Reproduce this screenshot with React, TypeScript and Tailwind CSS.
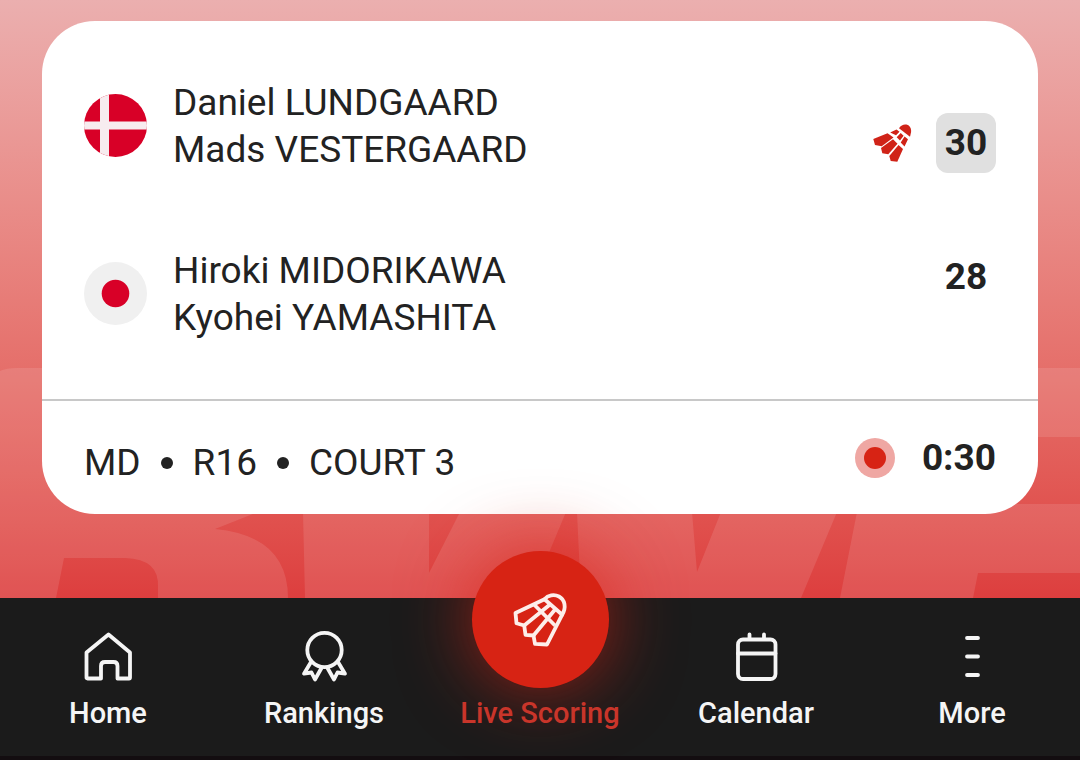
import type { ReactNode } from "react";

const teams = [
  {
    id: 0,
    country: "Denmark",
    players: ["Daniel LUNDGAARD", "Mads VESTERGAARD"],
    score: 30,
    serving: true,
  },
  {
    id: 1,
    country: "Japan",
    players: ["Hiroki MIDORIKAWA", "Kyohei YAMASHITA"],
    score: 28,
    serving: false,
  },
];

const Flag = ({ country }: { country: string }) => {
  if (country === "Denmark") {
    return (
      <svg viewBox="0 0 63 63" className="size-[63px] shrink-0" role="img" aria-label={country}>
        <clipPath id="flag-clip">
          <circle cx="31.5" cy="31.5" r="31.5" />
        </clipPath>
        <g clipPath="url(#flag-clip)">
          <rect width="63" height="63" fill="#d80027" />
          <path d="M16 0h9v63h-9zM0 27.5h63v8H0z" fill="#f7ecef" />
        </g>
      </svg>
    );
  }

  return (
    <svg viewBox="0 0 63 63" className="size-[63px] shrink-0" role="img" aria-label={country}>
      <circle cx="31.5" cy="31.5" r="31.5" fill="#f0f0f0" />
      <circle cx="31.5" cy="31.5" r="13.8" fill="#d80027" />
    </svg>
  );
};

const ServeIcon = () => (
  <svg viewBox="0 0 40 40" className="size-10" fill="#d02318" aria-label="Serving" role="img">
    <path d="M27 5.300C29 2 32 1 34.500 1.600 38 2.500 39.600 6 39 9.500L38 13.700z" />
    <path d="M18.200 9.500 24.500 6.500 27.500 8.700 24 12.200zM24.700 14.200 28.700 10 31.600 12.700 28 17.500zM32.600 13.500 36 16.200 32.500 23.500 28.700 19.500z" />
    <path d="M1.300 16 15.500 10.300 21.500 14.600 9.700 23.300 3 22z" />
    <path d="M9 25 21 16.200 25.500 20.800 16.300 31.200 10.300 30.300z" />
    <path d="M17.300 33 26.500 22 31 26 25.300 38.700 18.700 38z" />
  </svg>
);

// light band behind the card, cut by the darker shards
const Backdrop = () => (
  <svg
    viewBox="0 0 1080 238"
    preserveAspectRatio="xMidYMax slice"
    className="absolute inset-x-0 bottom-0 h-[238px] w-full"
    aria-hidden="true"
  >
    <mask id="shards">
      <rect width="1080" height="238" fill="#fff" />
      <g fill="#000">
        <path d="M0 8v3Q6 8 18 8z" />
        <path d="M960 77h120v67H960z" />
        <path d="M258 152L215 169Q288 176 288 238H305L303 152z" />
        <path d="M64 198H125Q160 199 158 228V238H56z" />
        <path d="M429 152H460L429 213z" />
        <path d="M566 152H577L581 238H530z" />
        <path d="M692 152H721L697 212z" />
        <path d="M837 152H857L840 238H801z" />
        <path d="M978 213H1080V238H973z" />
      </g>
    </mask>
    <rect y="8" width="1080" height="230" fill="#fff" fillOpacity="0.11" mask="url(#shards)" />
  </svg>
);

const NavIcon = ({ children }: { children: ReactNode }) => (
  <svg
    viewBox="0 0 54 54"
    className="size-[54px]"
    fill="none"
    stroke="#f5f5f5"
    strokeWidth="3.8"
    strokeLinecap="round"
    strokeLinejoin="round"
    aria-hidden="true"
  >
    {children}
  </svg>
);

const navItems = [
  {
    label: "Home",
    icon: (
      <NavIcon>
        <path d="M5.500 22.500 27.500 4.500 49 22.500V47.500q0 1-1 1H36.500V36q0-4-4-4H24q-4 0-4 4V48.500H6.500q-1 0-1-1z" />
      </NavIcon>
    ),
  },
  {
    label: "Rankings",
    icon: (
      <NavIcon>
        <circle cx="27.500" cy="20" r="17.200" />
        <path d="M14 32 7 43.700 14.500 42.500 18 49.500 24.500 38M41 32 48 43.700 40.500 42.500 37 49.500 30.500 38" />
      </NavIcon>
    ),
  },
  {
    label: "Live Scoring",
    active: true,
  },
  {
    label: "Calendar",
    icon: (
      <NavIcon>
        <rect x="9" y="9.500" width="37.500" height="39.500" rx="5" />
        <path d="M9 23.500H46.500M20.500 4.500V8.500M35 4.500V8.500" />
      </NavIcon>
    ),
  },
  {
    label: "More",
    icon: (
      <NavIcon>
        <path d="M22 8H33M22 26.500H33M22 45H33" />
      </NavIcon>
    ),
  },
];

const LiveIcon = () => (
  <svg
    viewBox="0 0 60 60"
    className="size-[60px]"
    fill="none"
    stroke="#fdeeea"
    strokeWidth="3.8"
    strokeLinejoin="round"
    aria-hidden="true"
  >
    <path d="M34.500 9.200C38 5.200 44 4 49 6.500c6 3.200 7.500 11 3.200 18.200z" />
    <path d="M34.500 9.200 5.500 23 6.500 33.200 14.200 35.500 15.500 44.800 23.500 45.500 25 53.800 37 54.500 52.200 24.700" />
    <path d="M24.500 15 45 35.500M14.200 35.500 40 14.500M23.500 45.500 45.500 19" />
  </svg>
);

const ScoreCard = () => (
  <section className="relative overflow-hidden rounded-[53px] bg-white text-[#222]">
    <div className="flex flex-col gap-[74px] px-[42px] pt-[58px] pb-[58px]">
      {teams.map((team) => (
        <div key={team.id} className="flex gap-[26px]">
          <div className="pt-[15px]">
            <Flag country={team.country} />
          </div>

          <div className="flex-1 text-[37px] leading-[47px]">
            {team.players.map((player) => (
              <p key={player}>{player}</p>
            ))}
          </div>

          {team.serving ? (
            <div className="flex items-center gap-6 self-end">
              <ServeIcon />
              <span className="flex size-[60px] items-center justify-center rounded-[12px] bg-[#e0e0e0] text-[37px] font-bold">
                {team.score}
              </span>
            </div>
          ) : (
            <span className="w-[60px] text-center text-[37px] leading-[60px] font-bold">
              {team.score}
            </span>
          )}
        </div>
      ))}
    </div>

    <div className="flex items-end justify-between border-t-2 border-[#c8c8c8] px-[42px] pt-[33px] pb-8">
      <ul className="flex items-center gap-5 text-[37px] leading-[38px]">
        <li>MD</li>
        <li className="size-3 rounded-full bg-[#222]" />
        <li>R16</li>
        <li className="size-3 rounded-full bg-[#222]" />
        <li>COURT 3</li>
      </ul>

      <div className="flex items-center gap-[27px]">
        <span className="flex size-10 items-center justify-center rounded-full bg-[#efa7a3]">
          <span className="size-[22px] rounded-full bg-[#d72314]" />
        </span>
        <time className="text-[37px] leading-[48px] font-bold">0:30</time>
      </div>
    </div>
  </section>
);

const BottomNav = () => (
  <nav className="relative grid h-[162px] grid-cols-5 border-b-4 border-[#130d10] bg-[#1b1b1b] text-[29px] leading-[34px] font-medium text-[#f5f5f5]">
    {navItems.map((item) =>
      item.active ? (
        <button key={item.label} className="relative flex flex-col items-center text-[#c9352a]">
          <span className="-mt-[47px] flex size-[137px] items-center justify-center rounded-full bg-[#d72314] shadow-[0_0_72px_#d72314b0]">
            <LiveIcon />
          </span>
          <span className="relative mt-2 whitespace-nowrap">{item.label}</span>
        </button>
      ) : (
        <button key={item.label} className="relative z-10 flex flex-col items-center pt-8">
          {item.icon}
          <span className="mt-3">{item.label}</span>
        </button>
      ),
    )}
  </nav>
);

const App = () => {
  return (
    <div className="flex min-h-screen flex-col overflow-hidden bg-[#1b1b1b] font-['Roboto',sans-serif]">
      <main className="relative flex-1 bg-linear-to-b from-[#ebafaf] to-[#dd3e3e] px-[42px] pt-[21px] pb-[83px]">
        <Backdrop />
        <ScoreCard />
      </main>
      <BottomNav />
    </div>
  );
};

export default App;
